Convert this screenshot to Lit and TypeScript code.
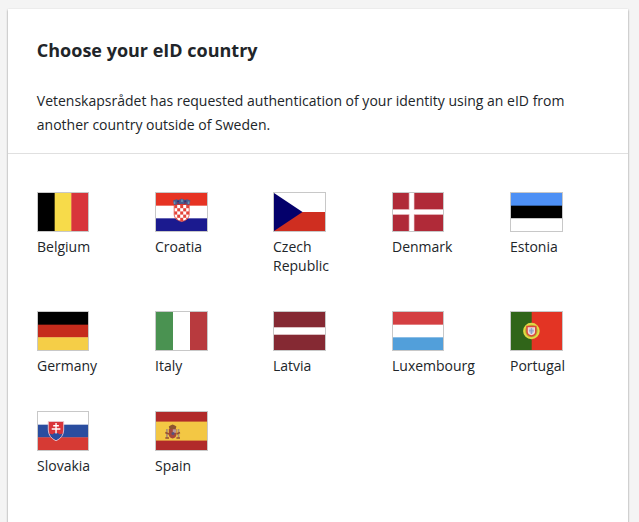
import { LitElement, html, svg, css } from "lit";
import { customElement } from "lit/decorators.js";

const bars = (colors: string[], vertical = false) =>
  colors.map((c, i) =>
    vertical
      ? svg`<rect x=${(i * 51) / 3} y="0" width="17.4" height="38" fill=${c} />`
      : svg`<rect x="0" y=${(i * 38) / 3} width="51" height="13" fill=${c} />`
  );

const checks = [0, 1, 2, 3, 4].flatMap((r) =>
  [0, 1, 2, 3, 4]
    .filter((c) => (r + c) % 2 === 0)
    .map((c) => svg`<rect x=${18.2 + c * 3} y=${12 + r * 3.2} width="3" height="3.2" fill="#e4453a" />`)
);

const countries = [
  { name: "Belgium", flag: bars(["#000", "#f7db4a", "#d8353b"], true) },
  {
    name: "Croatia",
    flag: svg`${bars(["#e63323", "#fff", "#1b1a8f"])}
      <clipPath id="hr"><path d="M18.2 12H33.2V22Q32.5 27 25.7 28.6Q18.9 27 18.2 22Z" /></clipPath>
      <g clip-path="url(#hr)"><rect x="18" y="12" width="16" height="17" fill="#fff" />${checks}</g>
      <path d="M18.2 12V22Q18.9 27 25.7 28.6Q32.5 27 33.2 22V12" fill="none" stroke="#e4453a" stroke-width=".8" />
      <path d="M18.2 12L17 7.5L20.5 6.3L22.5 7L25.7 5.5L29 7L31 6.3L34.4 7.5L33.2 12Q25.7 10 18.2 12Z" fill="#4b5a8c" />
      <path d="M18.5 8.5V11M26 6.5V9M32.6 8.5V11" stroke="#6595b8" stroke-width="1.6" />
      <path d="M22.2 7.5V10.8M29.3 7.5V10.8" stroke="#293679" stroke-width="2" />
      <path d="M21 10H23M28.5 10H30.5" stroke="#a43c58" />`,
  },
  {
    name: "Czech Republic",
    flag: svg`<rect width="51" height="38" fill="#fff" /><rect y="19" width="51" height="19" fill="#cf2e20" /><path d="M0 0L28.5 19L0 38Z" fill="#04006b" />`,
  },
  {
    name: "Denmark",
    flag: svg`<rect width="51" height="38" fill="#b02a38" /><path d="M19 0V38M0 19H51" stroke="#d9929a" stroke-width="6" /><path d="M19 0V38M0 19H51" stroke="#fff" stroke-width="4.6" />`,
  },
  { name: "Estonia", flag: bars(["#4d90f5", "#000", "#fff"]) },
  { name: "Germany", flag: bars(["#000", "#c52b1c", "#f5ce47"]) },
  { name: "Italy", flag: bars(["#4a9251", "#fff", "#b83a3e"], true) },
  {
    name: "Latvia",
    flag: svg`<rect width="51" height="38" fill="#852933" /><rect y="15.3" width="51" height="7.4" fill="#fff" />`,
  },
  { name: "Luxembourg", flag: bars(["#d43f42", "#fff", "#529fda"]) },
  {
    name: "Portugal",
    flag: svg`<rect width="51" height="38" fill="#e33424" /><rect width="20.7" height="38" fill="#306519" />
      <circle cx="20.4" cy="19" r="7.3" fill="#b9b530" stroke="#e2d944" stroke-width="2" />
      <path d="M16 14.5H24.8V20Q24.5 23.2 20.4 24Q16.3 23.2 16 20Z" fill="#f1dcda" stroke="#d9483b" stroke-width="1.5" />
      <path d="M18.2 16.5H22.6V20Q22 21.6 20.4 22Q18.8 21.6 18.2 20Z" fill="#b3bcdc" />
      <path d="M20.4 16V22M18 18.8H22.8" stroke="#8795c2" stroke-width=".8" />`,
  },
  {
    name: "Slovakia",
    flag: svg`${bars(["#fff", "#2a4d9f", "#d63a34"])}
      <path d="M10.5 9.5H26.2V18Q26 25.5 18.4 28.8Q10.8 25.5 10.5 18Z" fill="#d9343a" />
      <clipPath id="sk"><path d="M10.5 9.5H26.2V18Q26 25.5 18.4 28.8Q10.8 25.5 10.5 18Z" /></clipPath>
      <g clip-path="url(#sk)"><path d="M9 30V23.5Q12 20.5 14.5 22.5Q18.4 19 22.3 22.5Q25 20.5 28 23.5V30Z" fill="#2a4d9f" /></g>
      <path d="M18.4 11V21.5M15.5 13.8H21.3M14 17H22.8" stroke="#fff" stroke-width="1.4" />
      <path d="M10.5 9.5H26.2V18Q26 25.5 18.4 28.8Q10.8 25.5 10.5 18Z" fill="none" stroke="#e9c9d2" stroke-width=".9" />`,
  },
  {
    name: "Spain",
    flag: svg`<rect width="51" height="38" fill="#b12a2a" /><rect y="9.6" width="51" height="19" fill="#f3c744" />
      <path d="M12.8 17H20.4V23Q20 25.6 16.6 26.5Q13.2 25.6 12.8 23Z" fill="#a5473b" />
      <path d="M16.8 17.3H20V20.8H16.8Z" fill="#b99a98" />
      <circle cx="17" cy="21.5" r="1.5" fill="#55527f" />
      <path d="M13.5 17L12.8 14.6Q14 13.1 16.6 12.4Q19.2 13.1 20.4 14.6L19.7 17Z" fill="#8d5530" />
      <path d="M10.9 17V26M22.5 17V26" stroke="#ab9070" stroke-width="1.7" />
      <path d="M9.3 20.5L13 22M9.3 26H13M20.6 22L24 20.5M20.4 26H24" stroke="#99502f" stroke-width="1.6" />`,
  },
];

@customElement("app-root")
export class AppRoot extends LitElement {
  static styles = css`
    :host {
      display: block;
      box-sizing: border-box;
      height: 522px;
      padding: 9px 10.6px 0 8px;
      overflow: hidden;
      background: #f4f4f4;
      font-family: "Open Sans", "Noto Sans", sans-serif;
      color: #212529;
    }
    .card {
      height: 540px;
      background: #fff;
      box-shadow: 0 1px 2px rgba(0, 0, 0, 0.45);
    }
    .intro {
      box-sizing: border-box;
      height: 145px;
      padding: 28px 28.8px 0;
      border-bottom: 1px solid #e0e0e0;
    }
    h1 {
      margin: 0;
      font-size: 18px;
      line-height: 26px;
      font-weight: 700;
    }
    p {
      margin: 26px 0 0;
      font-size: 14px;
      line-height: 24px;
    }
    .grid {
      display: grid;
      grid-template-columns: 118px 118px 119px 118px 84px;
      gap: 41px 0;
      padding: 38px 0 0 29px;
    }
    .country {
      width: 84px;
      font-size: 14px;
      line-height: 19px;
    }
    .flag {
      display: block;
      box-sizing: border-box;
      width: 53px;
      height: 40px;
      border: 1px solid #c8c8c8;
      margin-bottom: 5px;
    }
    .country:nth-child(5n + 1) .flag,
    .country:nth-child(5n + 4) .flag {
      width: 52px;
    }
    .name {
      display: block;
      margin-bottom: -5px;
    }
  `;

  render() {
    return html`
      <main class="card">
        <header class="intro">
          <h1>Choose your eID country</h1>
          <p>
            Vetenskapsrådet has requested authentication of your identity using an eID from another
            country outside of Sweden.
          </p>
        </header>
        <section class="grid">
          ${countries.map(
            (c) => html`<div class="country">
              <svg class="flag" viewBox="0 0 51 38" preserveAspectRatio="none" aria-hidden="true">${c.flag}</svg>
              <span class="name">${c.name}</span>
            </div>`
          )}
        </section>
      </main>
    `;
  }
}
